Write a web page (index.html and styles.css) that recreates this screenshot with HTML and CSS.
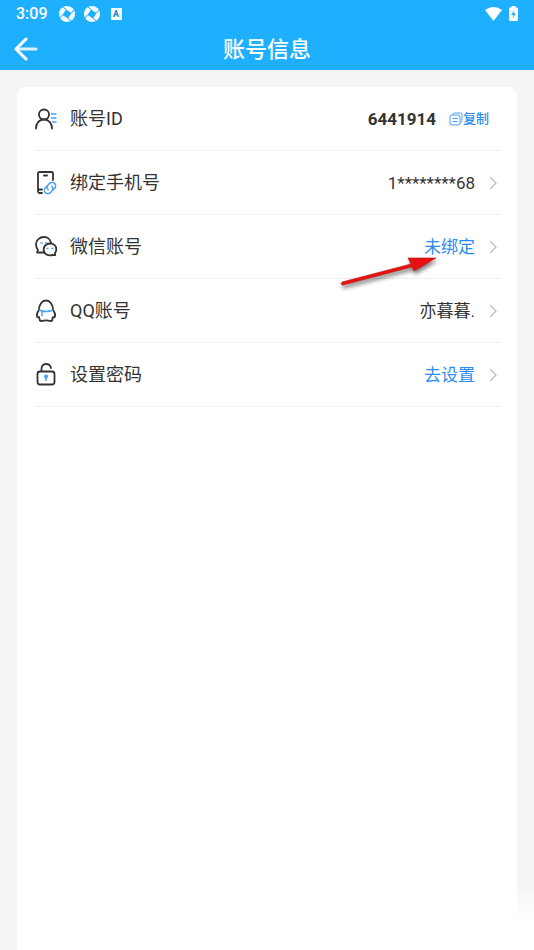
FILE: index.html
```html
<!DOCTYPE html>
<html lang="zh-CN">
<head>
<meta charset="utf-8">
<meta name="viewport" content="width=device-width, initial-scale=1">
<title>账号信息</title>
<link rel="stylesheet" href="styles.css">
</head>
<body>
<header class="top">
  <div class="status">
    <span class="time">3:09</span>
    <svg class="aperture" viewBox="0 0 16 16"><circle cx="8" cy="8" r="8" fill="#f2fbff"/><path d="M7 3.500 12.500 7 9 12.500 3.500 9Z" fill="#1fafff"/><path d="M7.500 4 4 1M12 7.500 15 4M8.500 12l3.500 3M4 8.500 1 12" stroke="#1fafff" stroke-width="1"/></svg>
    <svg class="aperture" viewBox="0 0 16 16"><circle cx="8" cy="8" r="8" fill="#f2fbff"/><path d="M7 3.500 12.500 7 9 12.500 3.500 9Z" fill="#1fafff"/><path d="M7.500 4 4 1M12 7.500 15 4M8.500 12l3.500 3M4 8.500 1 12" stroke="#1fafff" stroke-width="1"/></svg>
    <span class="badge">A</span>
    <span class="system">
      <svg width="17" height="14" viewBox="0 0 17 14"><path d="M0 3Q8.500-3 17 3L8.500 14Z" fill="#fff"/></svg>
      <svg width="9" height="15" viewBox="0 0 9 15"><path d="M2.500 0h4v1.500H8q1 0 1 1V14q0 1-1 1H1q-1 0-1-1V2.500q0-1 1-1h1.500Z" fill="#fff"/><path d="M5.500 4 2 9h2.300L3.500 12.500 7 7.500H4.700Z" fill="#1fafff"/></svg>
    </span>
  </div>
  <div class="titlebar">
    <button class="back" type="button" aria-label="返回"><svg width="24" height="24" viewBox="0 0 24 24" fill="none" stroke="#fff" stroke-width="3" stroke-linecap="round" stroke-linejoin="round"><path d="M4 12h18" stroke="#d8f1ff"/><path d="M12 2 2 12l10 10"/></svg></button>
    <h1>账号信息</h1>
  </div>
</header>
<main class="card">
  <ul class="list">
    <li class="row">
      <svg class="icon" viewBox="0 0 24 24"><g class="ink"><circle cx="10" cy="7.500" r="5"/><path d="M2 21.500c0-5 3-9 8-9s8 4 8 9"/></g><path class="accent" d="M17 7h5.500M17 11h5.500M18 15h4.500"/></svg>
      <span class="label">账号ID</span>
      <strong class="value">6441914</strong>
      <button class="copy" type="button"><svg width="14" height="14" viewBox="0 0 14 14" fill="none" stroke="#4a9ff0"><path d="M4 3V2.500Q4 1 5.500 1h6Q13 1 13 2.500v6Q13 10 11.500 10H11"/><rect x="1" y="3" width="10" height="10" rx="2"/><path d="M3.500 6.500h5M3.500 9.500h5"/></svg>复制</button>
    </li>
    <li class="row">
      <svg class="icon" viewBox="0 0 24 24"><path class="ink" d="M19 9V2.500q0-1.500-1.500-1.500h-12Q4 1 4 2.500v18Q4 22 5.500 22H8M10 4.500h3M4 18.500h4"/><g class="link-mark" transform="rotate(-45 16 17)"><path d="M15 13.500h-2a3.500 3.500 0 0 0 0 7h2a3.500 3.500 0 0 0 3.500-3.500"/><path d="M17 20.500h2a3.500 3.500 0 0 0 0-7h-2a3.500 3.500 0 0 0-3.500 3.500"/></g></svg>
      <span class="label">绑定手机号</span>
      <span class="value">1********68</span>
      <svg class="chevron" viewBox="0 0 8 14"><path d="m1 1 6 6-6 6"/></svg>
    </li>
    <li class="row">
      <svg class="icon" viewBox="0 0 24 24"><path class="ink" d="M17 8C16.500 4.500 13.500 2 10 2 5.500 2 2 5 2 9.500c0 2.200.7 4 2 5.300L3 17.500H10"/><path class="ink" d="M16 8.500c3.800 0 6.300 2.700 6.300 6 0 1.500-.5 2.700-1.400 3.700l.3 2-2.200-.3c-5 1.600-9.300-1-9.300-5.400 0-3.300 2.500-6 6.300-6Z"/><path class="accent" d="M6.500 8h2M11 8h2M12.500 13.500h2M17.500 13.500h2"/></svg>
      <span class="label">微信账号</span>
      <a class="value link" href="#wechat">未绑定</a>
      <svg class="chevron" viewBox="0 0 8 14"><path d="m1 1 6 6-6 6"/></svg>
    </li>
    <li class="row">
      <svg class="icon" viewBox="0 0 24 24"><path class="ink" d="M5 11C5 5.500 8 1.500 12 1.500S19 5.500 19 11c2 2.500 2.500 4.500 2 6.500-.3 1-1 1-2 .5 0 1-.2 1.600-.8 2.200.6 1.200-.2 1.800-1.700 1.800-1.700 0-2.800-.7-4.500-.7s-2.800.7-4.500.7c-1.500 0-2.300-.6-1.700-1.800C5.200 19.600 5 19 5 18c-1 .5-1.700.5-2-.5-.5-2 0-4 2-6.500Z"/><path class="accent" d="M5 11q7 3 14 0M8 12.500V17"/></svg>
      <span class="label">QQ账号</span>
      <span class="value">亦暮暮.</span>
      <svg class="chevron" viewBox="0 0 8 14"><path d="m1 1 6 6-6 6"/></svg>
    </li>
    <li class="row">
      <svg class="icon" viewBox="0 0 24 24"><g class="ink"><rect x="3.500" y="8.500" width="17" height="13" rx="2.500"/><path d="M7.500 8V6C7.500 3 9 1 12 1s4.500 1.500 5 4"/></g><circle cx="12" cy="13.500" r="2" fill="#45a0f5"/><path class="accent" d="M12 14v4"/></svg>
      <span class="label">设置密码</span>
      <a class="value link" href="#password">去设置</a>
      <svg class="chevron" viewBox="0 0 8 14"><path d="m1 1 6 6-6 6"/></svg>
    </li>
  </ul>
  <svg class="pointer" viewBox="0 0 100 36"><path d="M3 27 72 9 69 3 97 3 75 16 73 12 4 30Q1 30 3 27Z" fill="#e81010" stroke="#b51a1a" stroke-width=".6"/></svg>
</main>
<div class="glow"></div>
</body>
</html>
```
FILE: styles.css
```css
* { box-sizing: border-box; }
body {
  margin: 0;
  min-height: 100vh;
  display: flex;
  flex-direction: column;
  background: #f5f5f5;
  color: #333;
  font-family: Roboto, "Noto Sans CJK SC", sans-serif;
}
button { border: 0; padding: 0; background: none; font: inherit; }
svg { display: block; flex: none; }
.top { background: #1fafff; color: #fff; }
.status {
  display: flex;
  align-items: center;
  gap: 9px;
  height: 27px;
  padding: 0 16px;
}
.time { font-size: 16px; font-weight: 500; margin-right: 2px; }
.aperture { width: 16px; height: 16px; }
.badge {
  width: 11px;
  margin-left: 2px;
  border-radius: 1px;
  background: #f2fbff;
  color: #1682c4;
  font-size: 9px;
  font-weight: 700;
  line-height: 12px;
  text-align: center;
}
.system { display: flex; align-items: center; gap: 7px; margin-left: auto; }
.titlebar {
  display: grid;
  grid-template-columns: 24px 1fr 24px;
  align-items: center;
  height: 43px;
  padding: 0 14px;
}
h1 { margin: 0; padding-top: 2px; font-size: 22px; font-weight: 500; line-height: 32px; text-align: center; }
.card {
  position: relative;
  flex: 1;
  margin: 17px 17px 0;
  padding: 0 17px;
  border-radius: 9px 9px 0 0;
  background: #fff;
}
.list { margin: 0; padding: 0; list-style: none; }
.row {
  display: flex;
  align-items: center;
  height: 64px;
  border-bottom: 1px solid #eee;
}
.icon { width: 24px; height: 24px; margin-right: 12px; fill: none; }
.ink { stroke: #333; stroke-width: 1.8px; stroke-linecap: round; stroke-linejoin: round; }
.accent { stroke: #45a0f5; stroke-width: 1.5px; }
.link-mark { stroke: #45a0f5; stroke-width: 1.5px; stroke-linecap: round; }
.label { flex: 1; font-size: 18px; line-height: 26px; }
.value { font-size: 17px; line-height: 26px; }
.link { color: #2d8cf0; text-decoration: none; }
.copy {
  display: flex;
  align-items: center;
  margin: 0 11px 0 13px;
  color: #2d8cf0;
  font-size: 13px;
  font-weight: 500;
  line-height: 18px;
}
.chevron {
  width: 8px;
  height: 14px;
  margin: 0 3px 0 14px;
  fill: none;
  stroke: #c4c4c4;
  stroke-width: 1.5px;
}
.pointer {
  position: absolute;
  top: 168px;
  right: 78px;
  width: 100px;
  height: 36px;
  filter: drop-shadow(1px 3px 2px #0008);
  pointer-events: none;
}
.glow {
  position: fixed;
  right: 0;
  bottom: 0;
  width: 17px;
  height: 64px;
  background: linear-gradient(#fff0, #fff 60%);
}
```
